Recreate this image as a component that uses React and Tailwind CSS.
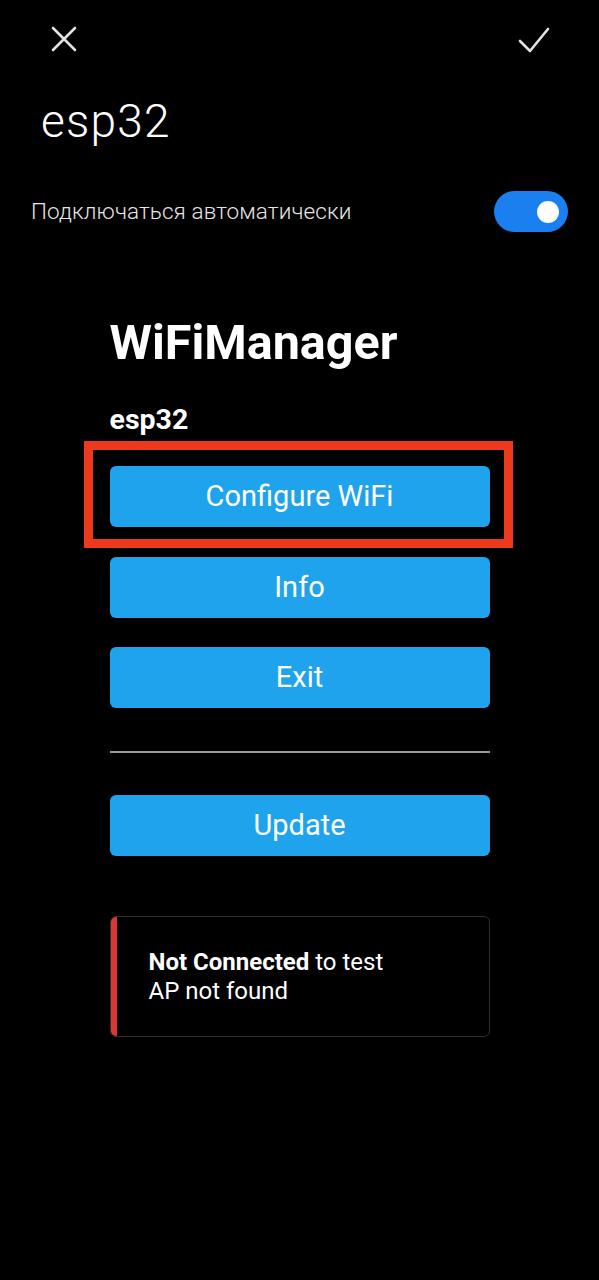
import React, { useState } from 'react';

const buttons = ['Configure WiFi', 'Info', 'Exit'];

const MenuButton = ({ label }) => (
  <button className="w-full h-[61px] rounded-[6px] bg-[#1fa3ec] text-white text-[29px] leading-none flex items-center justify-center">
    {label}
  </button>
);

const App = () => {
  const [autoConnect, setAutoConnect] = useState(true);

  return (
    <div className="min-h-[1280px] w-full bg-black text-white font-['Roboto',sans-serif]">
      {/* top bar */}
      <div className="flex justify-between items-start pl-[51px] pr-[49px] pt-[26px]">
        <svg width="26" height="26" viewBox="0 0 26 26" className="text-[#e2e2e2]">
          <path d="M2 2 L24 24 M24 2 L2 24" stroke="currentColor" strokeWidth="2.6" strokeLinecap="round" fill="none" />
        </svg>
        <svg width="32" height="28" viewBox="0 0 32 28" className="text-[#e2e2e2]">
          <path d="M2 15 L12 25 L30 3" stroke="currentColor" strokeWidth="2.6" strokeLinecap="round" strokeLinejoin="round" fill="none" />
        </svg>
      </div>

      <h1 className="mt-[41px] pl-[41px] text-[46px] leading-[52px] font-light tracking-[1.2px]">esp32</h1>

      <div className="mt-[44px] pl-[31px] pr-[31px] flex items-center justify-between">
        <span className="text-[22.5px] font-light text-[#e6e6e6] tracking-[0.1px]">Подключаться автоматически</span>
        <button
          onClick={() => setAutoConnect(!autoConnect)}
          className={`w-[74px] h-[41px] rounded-full flex items-center px-[9px] ${autoConnect ? 'bg-[#1a80f0] justify-end' : 'bg-[#444] justify-start'}`}
        >
          <span className="block w-[22px] h-[22px] rounded-full bg-white" />
        </button>
      </div>

      {/* WiFiManager portal */}
      <div className="w-[380px] mx-auto mt-[82px]">
        <h2 className="text-[48.5px] leading-[58px] font-bold">WiFiManager</h2>
        <h3 className="mt-[32px] text-[28.5px] leading-[32px] font-bold">esp32</h3>

        <div className="relative mt-[30px]">
          <MenuButton label={buttons[0]} />
          <div className="absolute left-[-26px] right-[-23px] top-[-25px] bottom-[-21px] border-[9px] border-[#ee3a1c] pointer-events-none" />
        </div>
        <div className="mt-[30px]">
          <MenuButton label={buttons[1]} />
        </div>
        <div className="mt-[29px]">
          <MenuButton label={buttons[2]} />
        </div>

        <div className="mt-[43px] h-[2px] bg-[#9a9a9a]" />

        <div className="mt-[42px]">
          <MenuButton label="Update" />
        </div>

        <div className="mt-[60px] h-[121px] flex rounded-[6px] border border-[#2e2e2e] overflow-hidden">
          <div className="w-[6px] bg-[#dc3733]" />
          <div className="pl-[32px] pt-[31px] text-[24px] leading-[29px]">
            <div>
              <span className="font-bold">Not Connected</span> to test
            </div>
            <div>AP not found</div>
          </div>
        </div>
      </div>
    </div>
  );
};

export default App;
